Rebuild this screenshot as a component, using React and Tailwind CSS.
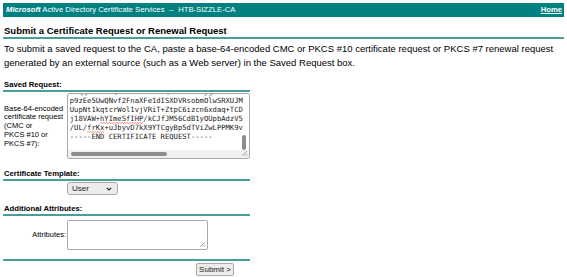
import React from "react";

const Rule = ({ w = "w-full" }) => <div className={`${w} h-[2px] bg-[#4a9e9a]`} />;

const zig = (() => {
  let d = "M0 1.6";
  for (let i = 1; i <= 60; i++) d += ` L${i * 1.2} ${i % 2 ? 0.4 : 1.6}`;
  return d;
})();

function Squiggle({ children }) {
  return (
    <span className="relative">
      {children}
      <svg
        className="absolute left-0 bottom-[-1px] w-full h-[2px] overflow-hidden"
        viewBox="0 0 40 2"
        preserveAspectRatio="xMinYMid slice"
      >
        <path d={zig} fill="none" stroke="#e0301e" strokeWidth="0.55" />
      </svg>
    </span>
  );
}

function SavedRequestBox() {
  return (
    <div className="relative w-[184px] h-[66px] border border-[#a9a9a9] rounded-[2px] bg-white overflow-hidden">
      <div className="-mt-[6px] pl-[2px] font-['DejaVu_Sans_Mono',monospace] text-[7.2px] leading-[8.9px] text-[#222] whitespace-pre">
        <div>eSqqGsIb3DQEBCwUAA4IBAQBxr7t0bJygLE7sMnHx</div>
        <div>p9zEe5UwQNvf2FnaXFe1dISXDVRsobmOlwSRXUJM</div>
        <div>UupNt1kqtcrWol1vjVRiT+ZtpC6izcn6xdaq+TCD</div>
        <div>
          j18VAW+<Squiggle>hYImeSfIHP</Squiggle>/kCJfJM56CdB1yOUpbAdzV5
        </div>
        <div>
          /UL/<Squiggle>frKx</Squiggle>+uJbyvD7kX9YTCgyBp5dTViZwLPPMK9v
        </div>
        <div>-----END CERTIFICATE REQUEST-----</div>
      </div>
      {/* vertical scrollbar thumb */}
      <div className="absolute right-[3px] top-[41px] w-[4px] h-[15px] rounded-full bg-[#8c8c8c]" />
      {/* horizontal scrollbar track & thumb */}
      <div className="absolute left-0 right-0 bottom-0 h-[8px] bg-[#f0f0f0]" />
      <div className="absolute left-[3px] bottom-[2px] w-[96px] h-[4px] rounded-full bg-[#8c8c8c]" />
      <ResizeGrip />
    </div>
  );
}

function ResizeGrip() {
  return (
    <svg className="absolute right-[1px] bottom-[1px]" width="7" height="7" viewBox="0 0 7 7">
      <path d="M6 1 L1 6 M6 3.5 L3.5 6 M6 5.5 L5.5 6" stroke="#a0a0a0" strokeWidth="0.9" />
    </svg>
  );
}

export default function App() {
  return (
    <div className="w-[567px] h-[277px] bg-white overflow-hidden font-['Liberation_Sans',Arial,sans-serif] text-black pt-[3px] px-[3px]">
      <div className="flex items-center justify-between h-[14px] bg-[#008080] text-white text-[7.7px] pl-[3px] pr-[2px]">
        <div>
          <span className="font-bold italic">Microsoft</span> Active Directory Certificate Services &nbsp;-- &nbsp;HTB-SIZZLE-CA
        </div>
        <a className="font-bold underline">Home</a>
      </div>

      <div className="mt-[8px] pl-[1px] text-[9.5px] font-bold leading-[12px]">
        Submit a Certificate Request or Renewal Request
      </div>
      <Rule />

      <p className="mt-[3px] pl-[1px] text-[9.5px] leading-[14px]">
        To submit a saved request to the CA, paste a base-64-encoded CMC or PKCS #10 certificate request or PKCS #7 renewal request generated by an external source (such as a Web server) in the Saved Request box.
      </p>

      <div className="w-[247px] mt-[10px]">
        <div className="pl-[1px] text-[7.7px] font-bold leading-[10px]">Saved Request:</div>
        <Rule />
        <div className="flex mt-[1px]">
          <div className="w-[64px] pl-[1px] pt-[11.5px] text-[7.5px] leading-[8.9px]">
            Base-64-encoded<br />certificate request<br />(CMC or<br />PKCS #10 or<br />PKCS #7):
          </div>
          <SavedRequestBox />
        </div>

        <div className="mt-[10px] pl-[1px] text-[7.7px] font-bold leading-[10px]">Certificate Template:</div>
        <Rule />
        <div className="flex mt-[1px]">
          <div className="w-[64px]" />
          <div className="flex items-center justify-between w-[51px] h-[13px] border border-[#a9a9a9] rounded-[3px] bg-[#ececec] pl-[4px] pr-[5px] text-[8px] text-[#222]">
            <span>User</span>
            <svg width="6" height="4" viewBox="0 0 6 4">
              <path d="M0.8 0.8 L3 3 L5.2 0.8" fill="none" stroke="#222" strokeWidth="1.1" />
            </svg>
          </div>
        </div>

        <div className="mt-[9px] pl-[1px] text-[7.7px] font-bold leading-[10px]">Additional Attributes:</div>
        <Rule />
        <div className="flex items-center mt-[4px]">
          <div className="w-[64px] text-right pr-[1px] text-[7.5px]">Attributes:</div>
          <div className="relative w-[141px] h-[30px] border border-[#a9a9a9] rounded-[2px] bg-white">
            <ResizeGrip />
          </div>
        </div>

        <div className="mt-[9px]">
          <Rule />
        </div>
        <div className="flex mt-[2px] pl-[193px]">
          <div className="flex items-center justify-center w-[38px] h-[13px] border border-[#a9a9a9] rounded-[2px] bg-[#ececec] text-[8px] text-[#222]">
            Submit &gt;
          </div>
        </div>
      </div>
    </div>
  );
}
